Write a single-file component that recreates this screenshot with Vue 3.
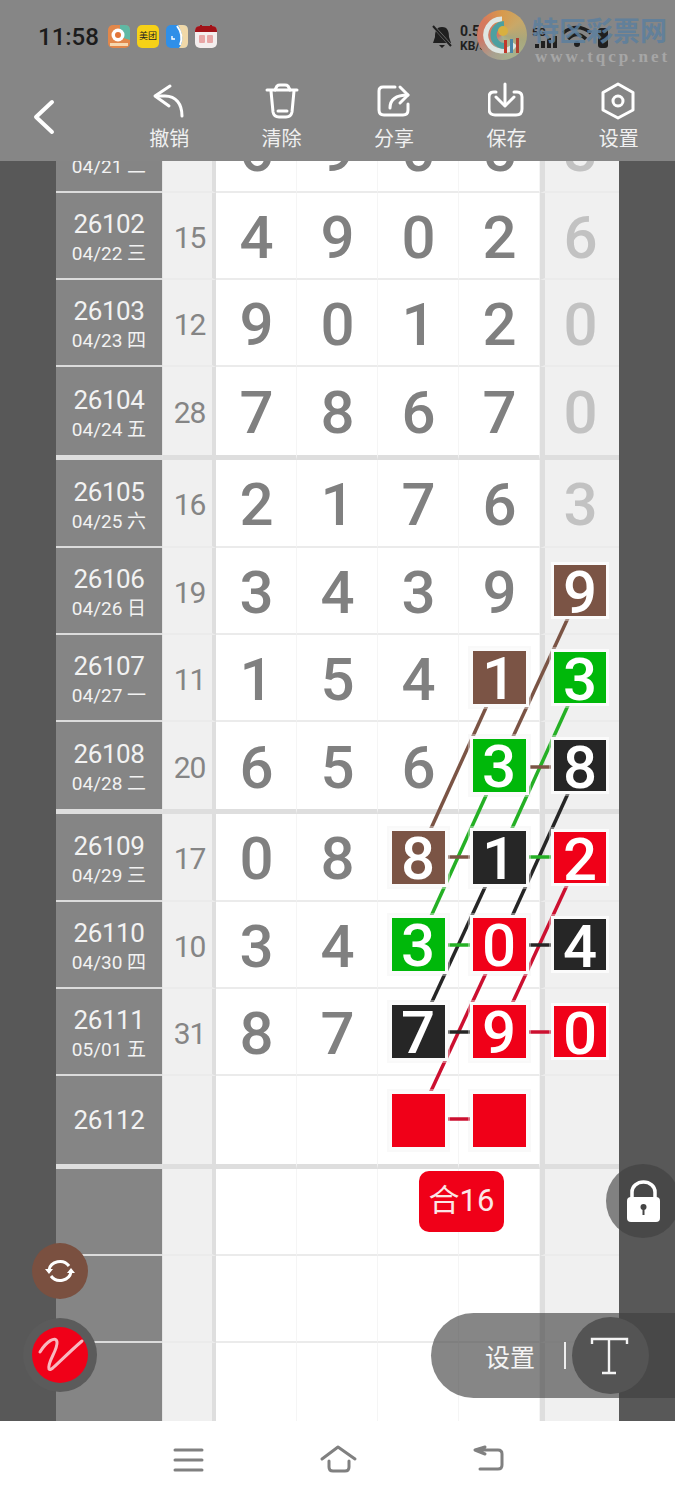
<script setup>
const c = (t, k) => ({ t, k })
const rows = [
  { h: 87, no: '26101', date: '04/21 二', sum: '20', cells: ['6', '9', '0', '5'], last: '3' },
  { h: 87, no: '26102', date: '04/22 三', sum: '15', cells: ['4', '9', '0', '2'], last: '6' },
  { h: 87, no: '26103', date: '04/23 四', sum: '12', cells: ['9', '0', '1', '2'], last: '0' },
  { h: 93, no: '26104', date: '04/24 五', sum: '28', cells: ['7', '8', '6', '7'], last: '0', end: true },
  { h: 88, no: '26105', date: '04/25 六', sum: '16', cells: ['2', '1', '7', '6'], last: '3' },
  { h: 87, no: '26106', date: '04/26 日', sum: '19', cells: ['3', '4', '3', '9'], last: c('9', 'brown') },
  { h: 87, no: '26107', date: '04/27 一', sum: '11', cells: ['1', '5', '4', c('1', 'brown')], last: c('3', 'green') },
  { h: 92, no: '26108', date: '04/28 二', sum: '20', cells: ['6', '5', '6', c('3', 'green')], last: c('8', 'black'), end: true },
  { h: 88, no: '26109', date: '04/29 三', sum: '17', cells: ['0', '8', c('8', 'brown'), c('1', 'black')], last: c('2', 'red') },
  { h: 87, no: '26110', date: '04/30 四', sum: '10', cells: ['3', '4', c('3', 'green'), c('0', 'red')], last: c('4', 'black') },
  { h: 87, no: '26111', date: '05/01 五', sum: '31', cells: ['8', '7', c('7', 'black'), c('9', 'red')], last: c('0', 'red') },
  { h: 93, no: '26112', date: '', sum: '', cells: ['', '', c('', 'red'), c('', 'red')], last: '', end: true },
  { h: 87, no: '', date: '', sum: '', cells: ['', '', '', ''], last: '' },
  { h: 87, no: '', date: '', sum: '', cells: ['', '', '', ''], last: '' },
  { h: 90, no: '', date: '', sum: '', cells: ['', '', '', ''], last: '', open: true }
]
const tools = [
  { label: '撤销', box: '152 82 34 38', paths: ['M170 86 L155 96 L169 106', 'M156 96 H165 C176 96 182 104 182 116'] },
  { label: '清除', box: '264 82 34 38', paths: ['M266 90 H296', 'M274 90 L276 86 Q277 85 279 85 H284 Q286 85 287 86 L289 90', 'M270 91 L272 112 Q273 117 278 117 H285 Q290 117 291 112 L293 91', 'M277 111 H286'] },
  { label: '分享', box: '377 82 34 38', paths: ['M395 87 H383 Q379 87 379 91 V110 Q379 115 384 115 H403 Q408 115 408 110 V104', 'M390 108 C390 99 396 95 408 95', 'M400 87 L408 95 L400 103'] },
  { label: '保存', box: '489 82 36 38', paths: ['M497 92 H495 Q490 92 490 97 V109 Q490 115 496 115 H517 Q523 115 523 109 V97 Q523 92 518 92 H515', 'M506 84 V105', 'M497 97 L506 106 L515 97'] },
  { label: '设置', box: '602 82 36 38', paths: ['M619 84 L634 92.5 V110 L619 118 L604 110 V92.5 Z', 'M619 96 A5 5 0 1 0 619 106 A5 5 0 1 0 619 96 Z'] }
]
const wires = [
  { k: 'brown', p: [580, 592, 499, 767] }, { k: 'brown', p: [499, 679, 418, 857] },
  { k: 'green', p: [580, 679, 499, 857] }, { k: 'green', p: [499, 767, 418, 945] },
  { k: 'black', p: [580, 767, 499, 945] }, { k: 'black', p: [499, 857, 418, 1032] },
  { k: 'red', p: [580, 857, 499, 1032] }, { k: 'red', p: [499, 945, 418, 1119] },
  { k: 'brown', p: [530, 767, 551, 767] }, { k: 'brown', p: [448, 857, 470, 857] },
  { k: 'green', p: [529, 857, 551, 857] }, { k: 'green', p: [448, 945, 470, 945] },
  { k: 'black', p: [529, 945, 551, 945] }, { k: 'black', p: [448, 1032, 470, 1032] },
  { k: 'red', p: [529, 1032, 551, 1032] }, { k: 'red', p: [448, 1119, 470, 1119] }
]
const isObj = v => typeof v === 'object'
</script>

<template>
  <div class="page">
    <header class="top">
      <div class="status">
        <span class="time">11:58</span>
        <div class="apps">
          <svg class="app" viewBox="0 0 22 23"><rect width="22" height="23" rx="5" fill="#e2874a" /><path d="M12 0 H17 Q22 0 22 5 V15 L12 12 Z" fill="#5fb8a4" /><circle cx="10" cy="10" r="6.5" fill="#fff" /><circle cx="10" cy="10" r="3" fill="#e2763a" /><rect x="2" y="18" width="18" height="3" fill="#f6d8b0" /></svg>
          <span class="app mt">美团</span>
          <svg class="app" viewBox="0 0 22 23"><rect width="22" height="23" rx="5" fill="#2f8fe8" /><path d="M12 0 H17 Q22 0 22 5 V18 Q22 23 17 23 H13 Q20 14 12 0 Z" fill="#f0d8a8" /><path d="M11 1 Q18 10 14 20" stroke="#fff" stroke-width="2" fill="none" /><path d="M6 11 V14 H9" stroke="#fff" stroke-width="1.4" fill="none" /></svg>
          <svg class="app" viewBox="0 0 22 23"><rect y="1" width="22" height="22" rx="5" fill="#f4eeee" /><path d="M0 7 V6 Q0 1 5 1 H17 Q22 1 22 6 V7 Z" fill="#a11218" /><rect x="5" width="2" height="4" fill="#a11218" /><rect x="15" width="2" height="4" fill="#a11218" /><rect x="4" y="10" width="6" height="8" rx="1" fill="#e8a6a6" /><rect x="12" y="10" width="6" height="8" rx="1" fill="#e8a6a6" /></svg>
        </div>
        <svg class="sys" viewBox="425 0 250 70">
          <path d="M442 27 C436 27 435 32 435 37 L433 43 H451 L449 37 C449 32 448 27 442 27 Z M439 45 H445 L442 48 Z" fill="#1f1f1f" />
          <path d="M434 27 L452 47" stroke="#868686" stroke-width="3" />
          <path d="M433 26 L451 46" stroke="#1f1f1f" stroke-width="2" />
          <text x="460" y="36" class="st big">0.5</text>
          <text x="460" y="50" class="st">KB/s</text>
          <text x="532" y="36" class="st small">5G</text>
          <g fill="#1f1f1f"><rect x="535" y="44" width="4" height="4" /><rect x="541" y="41" width="4" height="7" /><rect x="547" y="38" width="4" height="10" /><rect x="553" y="36" width="4" height="12" /></g>
          <g fill="none" stroke="#1f1f1f" stroke-width="3.5"><path d="M563 33 Q577 22 591 33" /><path d="M568 39 Q577 30 586 39" /></g>
          <circle cx="577" cy="44" r="3" fill="#1f1f1f" />
          <rect x="598" y="28" width="10" height="20" rx="3" fill="#1f1f1f" />
        </svg>
      </div>
      <div class="toolbar">
        <svg class="back" viewBox="32 98 24 38"><path d="M52 102 L36 117 L52 132" /></svg>
        <div class="tools">
          <div v-for="tool in tools" :key="tool.label" class="tool">
            <svg class="ico" :viewBox="tool.box"><path v-for="d in tool.paths" :key="d" :d="d" /></svg>
            <span>{{ tool.label }}</span>
          </div>
        </div>
      </div>
    </header>

    <main class="main">
      <div class="side"></div>
      <div class="table">
        <div class="grid">
          <div
            v-for="(row, ri) in rows"
            :key="ri"
            class="row"
            :class="{ end: row.end, open: row.open }"
            :style="{ height: row.h + 'px' }"
          >
            <div class="cell lab">
              <div class="labin" :class="{ two: row.date }">
                <div class="no">{{ row.no }}</div>
                <div v-if="row.date" class="date">{{ row.date }}</div>
              </div>
            </div>
            <div class="cell sum"><span>{{ row.sum }}</span></div>
            <div v-for="(v, i) in row.cells" :key="i" class="cell num">
              <span v-if="isObj(v)" class="sq" :class="v.k">{{ v.t }}</span>
              <span v-else class="d">{{ v }}</span>
            </div>
            <div class="cell last">
              <span v-if="isObj(row.last)" class="sq small" :class="row.last.k">{{ row.last.t }}</span>
              <span v-else class="d pale">{{ row.last }}</span>
            </div>
          </div>
        </div>
        <svg class="wires" viewBox="56 161 563 1260">
          <line v-for="(l, i) in wires" :key="i" :class="'w-' + l.k" :x1="l.p[0]" :y1="l.p[1]" :x2="l.p[2]" :y2="l.p[3]" />
        </svg>
        <div class="total">合16</div>
      </div>
      <div class="side"></div>
    </main>

    <nav class="nav">
      <svg viewBox="167 1440 40 40"><path d="M174 1450 H201 M174 1460 H201 M174 1470 H201" /></svg>
      <svg viewBox="317 1440 40 40"><path d="M321 1459 L337 1447 L354 1459 M328 1461 V1467 Q328 1471 332 1471 H344 Q348 1471 348 1467 V1461" /></svg>
      <svg viewBox="467 1440 40 40"><path d="M484 1447 L474 1450 L484 1454 M476 1450 H497 Q501 1450 501 1454 V1465 Q501 1469 497 1469 H479" /></svg>
    </nav>

    <div class="logo">
      <svg viewBox="0 0 50 50">
        <path d="M25 9 A16 16 0 1 0 38 34" fill="none" stroke="#dfe6e2" stroke-width="5" />
        <path d="M27 14 A11 11 0 1 0 28 36" fill="none" stroke="#4da0a0" stroke-width="6" />
        <circle cx="26" cy="21" r="5" fill="#d8b040" />
        <rect x="27" y="30" width="3" height="13" fill="#c0392b" />
        <rect x="33" y="29" width="3" height="14" fill="#4a86a8" />
        <rect x="39" y="28" width="3" height="15" fill="#b04030" />
      </svg>
    </div>
    <div class="mark">
      <div class="mark-cn">特区彩票网</div>
      <div class="mark-en">www.tqcp.net</div>
    </div>

    <div class="fab sync">
      <svg viewBox="0 0 32 26">
        <path d="M5 12 A11 10 0 0 1 25 8" />
        <path d="M27 14 A11 10 0 0 1 7 18" />
        <path class="fill" d="M1 11 L9 11 L5 16 Z M31 15 L23 15 L27 10 Z" />
      </svg>
    </div>
    <div class="fab pen">
      <div class="pen-in">
        <svg viewBox="23 1318 74 74"><path d="M40 1352 C46 1342 56 1335 57 1342 C58 1350 47 1362 49 1369 C51 1372 58 1362 82 1341" /></svg>
      </div>
    </div>
    <div class="lock">
      <svg viewBox="625 1180 38 44">
        <path class="shackle" d="M632 1198 V1192 A11.5 10 0 0 1 655 1192 V1198" />
        <rect x="627" y="1197" width="33" height="25" rx="4" fill="#fff" />
        <circle cx="643.5" cy="1207" r="3" fill="#444" />
        <rect x="642.5" y="1208" width="2" height="7" fill="#444" />
      </svg>
    </div>
    <div class="pill">
      <span class="pill-t">设置</span>
      <i class="pill-sep"></i>
      <div class="pill-c">
        <svg viewBox="590 1335 40 42"><path d="M592 1344 V1339 H627 V1344 M609 1339 V1373 M602 1373 H616" /></svg>
      </div>
    </div>
  </div>
</template>

<style>
html, body { margin: 0; background: #fff; }
</style>

<style scoped>
.page {
  position: relative;
  width: 675px;
  height: 1500px;
  overflow: hidden;
  display: flex;
  flex-direction: column;
  background: #fff;
  font-family: Roboto, "Noto Sans CJK SC", sans-serif;
}
.top {
  height: 161px;
  background: #868686;
  display: flex;
  flex-direction: column;
  flex: none;
}
.status {
  height: 70px;
  display: flex;
  align-items: center;
  padding-left: 38px;
  padding-top: 3px;
  box-sizing: border-box;
}
.time {
  font-size: 24px;
  font-weight: 500;
  color: #1c1c1c;
  width: 70px;
}
.apps {
  display: flex;
  gap: 7px;
  align-items: center;
}
.app {
  width: 22px;
  height: 23px;
  display: block;
}
.mt {
  background: #f6d117;
  border-radius: 5px;
  color: #222;
  font-size: 9px;
  line-height: 23px;
  text-align: center;
}
.sys {
  width: 250px;
  height: 70px;
  margin-left: auto;
  margin-top: -3px;
  flex: none;
}
.st {
  font-family: Roboto, sans-serif;
  font-size: 12px;
  font-weight: 700;
  fill: #1f1f1f;
}
.st.big { font-size: 14px; }
.st.small { font-size: 11px; }
.toolbar {
  display: flex;
  height: 91px;
}
.back {
  width: 24px;
  height: 38px;
  margin: 28px 57px 0 32px;
  flex: none;
  fill: none;
  stroke: #fff;
  stroke-width: 4;
  stroke-linecap: round;
  stroke-linejoin: round;
}
.tools {
  flex: 1;
  display: grid;
  grid-template-columns: repeat(5, 1fr);
}
.tool {
  display: flex;
  flex-direction: column;
  align-items: center;
  padding-top: 12px;
  color: #f0f0f0;
  font-size: 20px;
  line-height: 26px;
}
.ico {
  width: 36px;
  height: 38px;
  margin-bottom: 6px;
  fill: none;
  stroke: #fff;
  stroke-width: 3;
  stroke-linecap: round;
  stroke-linejoin: round;
}
.main {
  flex: none;
  height: 1260px;
  display: flex;
  background: #585858;
}
.side {
  flex: none;
  width: 56px;
}
.table {
  position: relative;
  flex: none;
  width: 563px;
  overflow: hidden;
  background: #fff;
}
.grid {
  margin-top: -55px;
}
.row {
  display: grid;
  grid-template-columns: 106px 54px repeat(4, 81px) 79px;
}
.cell {
  box-sizing: border-box;
  border-bottom: 2px solid #ebebeb;
  display: flex;
  align-items: center;
  justify-content: center;
  min-height: 0;
}
.row.end .cell {
  border-bottom: 5px solid #dedede;
}
.row.open .cell {
  border-bottom: 0;
}
.lab {
  background: #858585;
  color: #f2f2f2;
  text-align: center;
}
.row .lab {
  border-bottom-color: #dcdcdc;
}
.labin {
  line-height: 29px;
}
.labin.two {
  padding-top: 7px;
}
.no {
  font-size: 26px;
  letter-spacing: -0.4px;
}
.date {
  font-size: 19px;
}
.sum {
  background: #f0f0f0;
  border-left: 1px solid #e4e4e4;
  border-right: 4px solid #dedede;
  color: #858585;
  font-size: 30px;
  letter-spacing: -1px;
  padding-left: 4px;
  padding-top: 3px;
}
.num {
  border-right: 1px solid #f5f5f5;
}
.last {
  background: #f0f0f0;
  border-left: 5px solid #dedede;
  padding-right: 4px;
}
.d {
  font-size: 60px;
  line-height: 60px;
  font-weight: 500;
  color: #808080;
  padding: 4px 0 0 1px;
}
.d.pale {
  color: #c2c2c2;
}
.sq {
  position: relative;
  z-index: 2;
  width: 53px;
  height: 53px;
  box-shadow: 0 0 0 3px #fbfbfb, 0 0 0 5px rgba(240, 240, 240, .4);
  color: #fff;
  font-size: 60px;
  line-height: 55px;
  font-weight: 500;
  text-align: center;
}
.sq.small {
  width: 52px;
  height: 51px;
}
.brown { background: #7b5445; }
.green { background: #00b80a; }
.black { background: #262626; }
.red { background: #f00018; }
.wires {
  position: absolute;
  left: 0;
  top: 0;
  width: 563px;
  height: 1260px;
  z-index: 1;
  stroke-width: 3.5;
}
.w-brown { stroke: #7b5445; }
.w-green { stroke: #25b025; }
.w-black { stroke: #262626; }
.w-red { stroke: #cc1030; }
.total {
  position: absolute;
  left: 363px;
  top: 1010px;
  width: 85px;
  height: 61px;
  border-radius: 10px;
  background: #f00018;
  color: #fbe6e6;
  font-size: 31px;
  line-height: 60px;
  text-align: center;
  z-index: 2;
}
.nav {
  flex: 1;
  display: flex;
  justify-content: center;
  gap: 110px;
  padding-top: 19px;
}
.nav svg {
  width: 40px;
  height: 40px;
  fill: none;
  stroke: #808080;
  stroke-width: 3;
  stroke-linecap: round;
  stroke-linejoin: round;
}
.logo {
  position: absolute;
  left: 477px;
  top: 10px;
  width: 50px;
  height: 50px;
  border-radius: 50%;
  background: conic-gradient(#d89a4c, #c9a868, #a9a77c, #a8b38e, #a8a090, #cc7a68, #d77a5c, #d89a4c);
}
.logo svg {
  display: block;
  width: 50px;
  height: 50px;
}
.mark {
  position: absolute;
  left: 532px;
  top: 15px;
  width: 134px;
}
.mark-cn {
  font-family: "Noto Sans CJK SC", sans-serif;
  font-size: 27px;
  line-height: 30px;
  font-weight: 700;
  color: #5c7f9e;
  white-space: nowrap;
  opacity: .85;
}
.mark-en {
  margin-top: 3px;
  font-family: "Liberation Serif", serif;
  font-size: 17px;
  line-height: 17px;
  font-weight: 700;
  letter-spacing: 3px;
  color: #a6a6a6;
  white-space: nowrap;
  padding-left: 3px;
}
.fab {
  position: absolute;
  border-radius: 50%;
  display: flex;
  align-items: center;
  justify-content: center;
  z-index: 3;
}
.sync {
  left: 32px;
  top: 1243px;
  width: 56px;
  height: 56px;
  background: #7a5040;
}
.sync svg {
  width: 32px;
  height: 26px;
  fill: none;
  stroke: #fff;
  stroke-width: 3;
}
.sync .fill {
  fill: #fff;
  stroke: none;
}
.pen {
  left: 23px;
  top: 1318px;
  width: 74px;
  height: 74px;
  background: #5b5b5b;
}
.pen-in {
  width: 56px;
  height: 56px;
  border-radius: 50%;
  background: #f00018;
  position: relative;
}
.pen-in svg {
  position: absolute;
  left: -9px;
  top: -9px;
  width: 74px;
  height: 74px;
  fill: none;
  stroke: #f8b8c0;
  stroke-width: 3;
  stroke-linecap: round;
}
.lock {
  position: absolute;
  left: 606px;
  top: 1164px;
  width: 74px;
  height: 74px;
  border-radius: 50%;
  background: rgba(63, 63, 63, .63);
  z-index: 3;
}
.lock svg {
  position: absolute;
  left: 19px;
  top: 16px;
  width: 38px;
  height: 44px;
}
.shackle {
  fill: none;
  stroke: #fff;
  stroke-width: 3.5;
}
.pill {
  position: absolute;
  left: 431px;
  top: 1313px;
  width: 244px;
  height: 85px;
  border-radius: 43px 0 0 43px;
  background: rgba(63, 63, 63, .63);
  display: flex;
  align-items: center;
  color: #f4f4f4;
  z-index: 3;
}
.pill-t {
  font-size: 25px;
  margin-left: 54px;
  width: 79px;
}
.pill-sep {
  width: 2px;
  height: 27px;
  background: #eee;
}
.pill-c {
  position: absolute;
  left: 141px;
  top: 4px;
  width: 77px;
  height: 77px;
  border-radius: 50%;
  background: #545454;
}
.pill-c svg {
  position: absolute;
  left: 18px;
  top: 18px;
  width: 40px;
  height: 42px;
  fill: none;
  stroke: #f4f4f4;
  stroke-width: 2.4;
}
</style>
